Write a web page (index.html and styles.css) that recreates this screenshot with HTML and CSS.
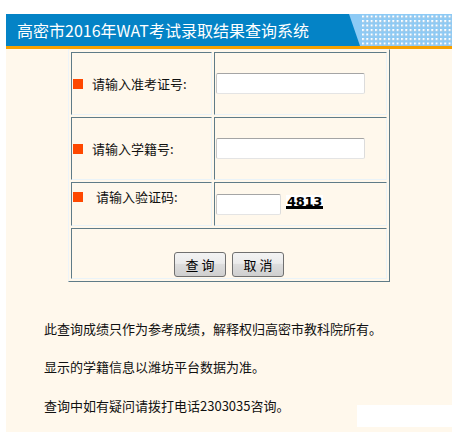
FILE: index.html
```html
<!DOCTYPE html>
<html lang="zh-CN">
<head>
<meta charset="utf-8">
<title>高密市2016年WAT考试录取结果查询系统</title>
<link rel="stylesheet" href="styles.css">
</head>
<body>
<div class="page">
  <div class="header">
    <h1 class="title">高密市2016年WAT考试录取结果查询系统</h1>
    <svg class="deco" width="103" height="32" viewBox="0 0 103 32" aria-hidden="true">
      <defs>
        <pattern id="dots" x="13" y="1.5" width="4.33" height="4.5" patternUnits="userSpaceOnUse">
          <rect x="0" y="0" width="2" height="2" fill="#ffffff"/>
          <rect x="2" y="1" width="1" height="1" fill="#b9c6d2"/>
          <rect x="1" y="2" width="1" height="1" fill="#b9c6d2"/>
        </pattern>
      </defs>
      <polygon points="0,0 103,0 103,32 11,32" fill="#8dcaf5"/>
      <rect x="13" y="1" width="90" height="31" fill="url(#dots)"/>
    </svg>
  </div>
  <div class="stripe"></div>

  <table class="form">
    <tr class="r1">
      <td class="lbl"><span class="mark"></span><span class="ltext">请输入准考证号:</span></td>
      <td class="fld"><input class="inp" type="text"></td>
    </tr>
    <tr class="r2">
      <td class="lbl"><span class="mark"></span><span class="ltext">请输入学籍号:</span></td>
      <td class="fld"><input class="inp" type="text"></td>
    </tr>
    <tr class="r3">
      <td class="lbl top"><span class="mark"></span><span class="ltext wide">请输入验证码:</span></td>
      <td class="fld"><input class="inp short" type="text"><span class="captcha">4813</span></td>
    </tr>
    <tr class="r4">
      <td class="btns" colspan="2"><button class="btn" type="button">查 询</button><button class="btn" type="button">取 消</button></td>
    </tr>
  </table>

  <div class="notes">
    <p class="note n1">此查询成绩只作为参考成绩，解释权归高密市教科院所有。</p>
    <p class="note n2">显示的学籍信息以潍坊平台数据为准。</p>
    <p class="note n3">查询中如有疑问请拨打电话2303035咨询。</p>
  </div>
  <div class="blank"></div>
</div>
</body>
</html>
```

FILE: styles.css
```css
html, body {
  margin: 0;
  padding: 0;
  background: #ffffff;
}
body {
  font-family: "Noto Sans CJK SC", "Noto Sans", sans-serif;
  font-size: 13px;
  color: #111;
}
.page {
  position: relative;
  width: 446px;
  margin: 14px 0 0 6px;
  min-height: 418px;
  background: #fff8ec;
}
.header {
  display: flex;
  align-items: stretch;
  height: 32px;
  background: #0483c6;
}
.title {
  flex: 1;
  margin: 0;
  padding-left: 11px;
  font-size: 16px;
  font-weight: normal;
  line-height: 32px;
  color: #ffffff;
  white-space: nowrap;
}
.deco {
  flex: none;
  display: block;
}
.stripe {
  height: 3px;
  background: #f7a100;
}
.form {
  width: 322px;
  margin: 0 auto;
  border-collapse: separate;
  border-spacing: 2px;
  border: 1px solid;
  border-color: #eef4f8 #5f7b87 #5f7b87 #eef4f8;
}
.form td {
  border: 1px solid;
  border-color: #5f7b87 #eaf3f8 #eaf3f8 #5f7b87;
  padding: 0 1px;
  vertical-align: middle;
}
.r1 td { height: 61px; }
.r2 td { height: 61px; }
.r3 td { height: 42px; }
.r4 td { height: 49px; }
.lbl {
  width: 137px;
  white-space: nowrap;
}
.r3 .lbl.top {
  vertical-align: top;
  padding-top: 3px;
  height: 39px;
}
.mark {
  display: inline-block;
  width: 10px;
  height: 10px;
  background: #ff4800;
  vertical-align: middle;
  margin-right: 9px;
  position: relative;
  top: 0;
}
.ltext {
  vertical-align: middle;
  line-height: 20px;
}
.ltext.wide {
  margin-left: 4px;
}
.inp {
  box-sizing: border-box;
  width: 149px;
  height: 21px;
  margin: 0;
  padding: 0 3px;
  border: 1px solid;
  border-color: #a5a5a5 #dcdcdc #e4e4e4 #c8c8c8;
  border-radius: 2px;
  background: #ffffff;
  vertical-align: middle;
  font-size: 13px;
}
.inp.short {
  width: 65px;
}
.captcha {
  display: inline-block;
  vertical-align: middle;
  margin-left: 5px;
  height: 11px;
  padding: 0 1px;
  background: #ffffff;
  border-bottom: 3px solid #000;
  font-family: "DejaVu Sans", sans-serif;
  font-size: 13px;
  font-weight: bold;
  line-height: 13px;
  letter-spacing: -0.3px;
  color: #000;
  position: relative;
  top: -2px;
  overflow: hidden;
}
.btns {
  text-align: center;
  vertical-align: bottom !important;
}
.btn {
  box-sizing: border-box;
  width: 52px;
  height: 25px;
  margin: 0 3px 1px;
  padding: 0;
  border: 1px solid #707070;
  border-radius: 3px;
  background: linear-gradient(#f3f3f3 0%, #ebebeb 45%, #dddddd 50%, #cfcfcf 100%);
  font-family: "Noto Sans CJK SC", sans-serif;
  font-size: 13px;
  color: #000;
  line-height: 22px;
}
.notes {
  padding: 37px 0 0 38px;
}
.note {
  margin: 0 0 18px;
  line-height: 20px;
  font-size: 13px;
  color: #111;
}
.n2 {
  margin-bottom: 19px;
}
.blank {
  position: absolute;
  right: 0;
  top: 391px;
  width: 95px;
  height: 22px;
  background: #ffffff;
}
```
